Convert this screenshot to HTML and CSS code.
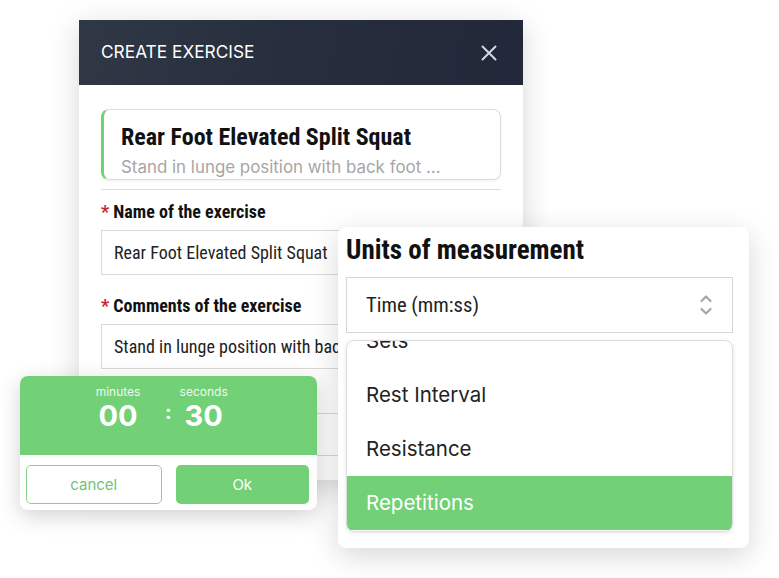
FILE: index.html
```html
<!DOCTYPE html>
<html lang="en">
<head>
  <meta charset="UTF-8" />
  <title>Create Exercise</title>
  <link rel="stylesheet" href="styles.css">
</head>
<body>

  <div class="stage">

    <div class="dialog">
      <div class="dialog-header">
        <span class="dialog-title">CREATE EXERCISE</span>
        <svg class="close" width="16" height="16" viewBox="0 0 16 16">
          <path d="M1.5 1.5 L14.5 14.5 M14.5 1.5 L1.5 14.5" stroke="#d3d7e3" stroke-width="2" stroke-linecap="round" fill="none"/>
        </svg>
      </div>
      <div class="dialog-body">
        <div class="preview">
          <div class="preview-title">Rear Foot Elevated Split Squat</div>
          <div class="preview-sub">Stand in lunge position with back foot ...</div>
        </div>
        <div class="divider"></div>

        <label class="field-label"><span class="req">*</span> Name of the exercise</label>
        <div class="field">Rear Foot Elevated Split Squat</div>

        <label class="field-label"><span class="req">*</span> Comments of the exercise</label>
        <div class="field">Stand in lunge position with back foot elevated on a bench</div>

        <div class="field field-hidden"></div>
      </div>
    </div>

    <div class="timer">
      <div class="timer-top">
        <div class="timer-col">
          <span class="timer-unit">minutes</span>
          <span class="timer-num">00</span>
        </div>
        <span class="timer-sep">:</span>
        <div class="timer-col">
          <span class="timer-unit">seconds</span>
          <span class="timer-num">30</span>
        </div>
      </div>
      <div class="timer-actions">
        <button class="btn btn-outline">cancel</button>
        <button class="btn btn-fill">Ok</button>
      </div>
    </div>

    <div class="units">
      <h2 class="units-title">Units of measurement</h2>
      <div class="select">
        <span>Time (mm:ss)</span>
        <svg width="14" height="24" viewBox="0 0 14 24">
          <path d="M2.5 8 L7 3.5 L11.5 8 M2.5 16 L7 20.5 L11.5 16" stroke="#a6a6a6" stroke-width="2.2" stroke-linecap="round" stroke-linejoin="round" fill="none"/>
        </svg>
      </div>
      <div class="options">
        <ul class="options-list">
          <li>Sets</li>
          <li>Rest Interval</li>
          <li>Resistance</li>
          <li class="active">Repetitions</li>
        </ul>
      </div>
    </div>

  </div>

</body>
</html>
```

FILE: styles.css
```css
body {
  margin: 0;
  background-color: white;
  font-family: Inter, "Open Sans", sans-serif;
  color: #222;
}

.stage {
  position: relative;
  width: 779px;
  height: 578px;
  overflow: hidden;
}

/* main dialog */
.dialog {
  position: absolute;
  left: 79px;
  top: 20px;
  width: 444px;
  height: 460px;
  background-color: white;
  box-shadow: 0 6px 28px rgba(0,0,0,0.16);
  overflow: hidden;
}

.dialog-header {
  height: 65px;
  display: flex;
  align-items: center;
  justify-content: space-between;
  padding: 0 26px 0 22px;
  background: linear-gradient(100deg, #303745 0%, #272e3d 45%, #222839 100%);
}

.dialog-title {
  color: white;
  font-size: 17.3px;
  line-height: 20px;
  margin-top: -2px;
}

.dialog-body {
  padding: 24px 22px 0;
  display: flex;
  flex-direction: column;
}

.preview {
  height: 71px;
  box-sizing: border-box;
  border: 1px solid #ddd;
  border-left: 3px solid #72d077;
  border-radius: 8px;
  padding: 13px 18px 0 17px;
  box-shadow: 0 1px 3px rgba(0,0,0,0.06);
}

.preview-title {
  font-family: "Roboto Condensed", "Liberation Sans Narrow", "DejaVu Sans Condensed", Roboto, sans-serif;
  font-weight: bold;
  font-size: 24px;
  color: #111;
  line-height: 29px;
}

.preview-sub {
  margin-top: 5px;
  font-size: 16.9px;
  line-height: 20px;
  color: #a6a6a6;
  white-space: nowrap;
}

.divider {
  margin-top: 9px;
  border-top: 1px solid #ddd;
}

.field-label {
  margin-top: 12px;
  height: 20px;
  line-height: 20px;
  font-family: "Roboto Condensed", "Liberation Sans Narrow", "DejaVu Sans Condensed", Roboto, sans-serif;
  font-weight: bold;
  font-size: 18px;
  color: #111;
}

.field-label + .field {
  margin-top: 8px;
}

.req {
  color: #c6282e;
}

.field {
  height: 45px;
  box-sizing: border-box;
  border: 1px solid #d9d9d9;
  padding: 0 12px;
  display: flex;
  align-items: center;
  font-family: "Roboto Condensed", "Liberation Sans Narrow", "DejaVu Sans Condensed", Roboto, sans-serif;
  font-size: 18px;
  color: #222;
  white-space: nowrap;
  overflow: hidden;
}

.field + .field-label {
  margin-top: 21px;
}

.field-hidden {
  margin-top: 44px;
  height: 43px;
}

/* timer popup */
.timer {
  position: absolute;
  left: 20px;
  top: 376px;
  width: 297px;
  height: 134px;
  background-color: white;
  border-radius: 8px;
  box-shadow: 0 6px 22px rgba(0,0,0,0.18);
  overflow: hidden;
}

.timer-top {
  height: 79px;
  background-color: #72d077;
  display: flex;
  align-items: flex-start;
  padding: 9px 0 0 68px;
  box-sizing: border-box;
  color: white;
}

.timer-col {
  width: 60px;
  display: flex;
  flex-direction: column;
  align-items: center;
}

.timer-unit {
  font-size: 12px;
  line-height: 14px;
  color: #eef9ef;
}

.timer-num {
  font-size: 29px;
  font-weight: bold;
  line-height: 34px;
}

.timer-sep {
  margin: 15px 2px 0 17px;
  font-size: 20px;
  font-weight: bold;
}

.timer-actions {
  display: flex;
  gap: 14px;
  padding: 10px 8px 0 6px;
}

.btn {
  flex: 1;
  height: 39px;
  border-radius: 5px;
  font-family: Inter, "Open Sans", sans-serif;
  font-size: 15px;
}

.btn-outline {
  background-color: white;
  border: 1px solid #86d48b;
  color: #72c277;
}

.btn-fill {
  background-color: #72d077;
  border: none;
  color: white;
}

/* units panel */
.units {
  position: absolute;
  left: 338px;
  top: 227px;
  width: 411px;
  height: 321px;
  box-sizing: border-box;
  padding: 8px 16px 0 8px;
  background-color: white;
  border-radius: 8px;
  box-shadow: 0 8px 30px rgba(0,0,0,0.16);
}

.units-title {
  margin: 0;
  font-family: "Roboto Condensed", "Liberation Sans Narrow", "DejaVu Sans Condensed", Roboto, sans-serif;
  font-weight: bold;
  font-size: 27px;
  line-height: 30px;
  color: #111;
}

.select {
  margin-top: 12px;
  height: 56px;
  box-sizing: border-box;
  border: 1px solid #d6d6d6;
  display: flex;
  align-items: center;
  justify-content: space-between;
  padding: 0 19px 0 19px;
  font-family: "Roboto Condensed", "Liberation Sans Narrow", "DejaVu Sans Condensed", Roboto, sans-serif;
  font-size: 20.6px;
  color: #222;
}

.options {
  margin-top: 7px;
  height: 190px;
  border: 1px solid #ddd;
  border-radius: 8px;
  overflow: hidden;
  box-shadow: 0 1px 4px rgba(0,0,0,0.1);
}

.options-list {
  list-style: none;
  margin: -27px 0 0;
  padding: 0;
}

.options-list li {
  height: 54px;
  line-height: 54px;
  padding-left: 19px;
  font-size: 20.5px;
  color: #222;
}

.options-list li.active {
  background-color: #72d077;
  color: white;
}
```
